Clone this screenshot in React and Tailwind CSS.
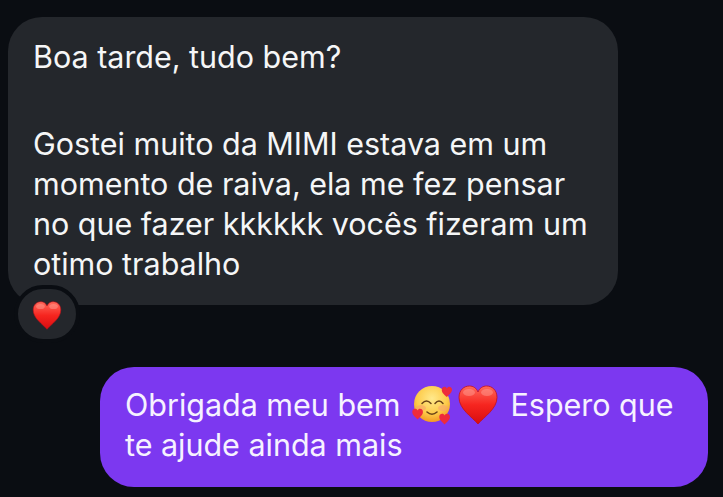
import React from "react";

const heartPath =
  "M20 39C14 32 1 24 1 12.500 1 5 6 1 11.500 1 15 1 18.500 3 20 7 21.500 3 25 1 28.500 1 34 1 39 5 39 12.500 39 24 26 32 20 39Z";

const Heart = ({ className, id }) => (
  <svg viewBox="0 0 40 40" className={className}>
    <defs>
      <linearGradient id={id} x1="0" y1="0" x2="0" y2="1">
        <stop offset="0" stopColor="#ff6a5c" />
        <stop offset="0.5" stopColor="#f6251f" />
        <stop offset="1" stopColor="#d80c10" />
      </linearGradient>
    </defs>
    <path d={heartPath} fill={`url(#${id})`} stroke="#c2101a" strokeWidth="0.800" />
    <ellipse cx="11" cy="7.500" rx="6" ry="3.500" fill="#ffb0a5" opacity="0.4" />
    <ellipse cx="29" cy="7.500" rx="6" ry="3.500" fill="#ffb0a5" opacity="0.4" />
  </svg>
);

const SmileHearts = () => (
  <svg viewBox="0 0 40 40" className="w-[40px] h-[40px]">
    <defs>
      <radialGradient id="face" cx="0.5" cy="0.35" r="0.65">
        <stop offset="0" stopColor="#ffe98c" />
        <stop offset="0.65" stopColor="#fdcb4a" />
        <stop offset="1" stopColor="#f39a22" />
      </radialGradient>
    </defs>
    <circle cx="20" cy="19" r="18" fill="url(#face)" />
    <ellipse cx="9" cy="23" rx="5" ry="3" fill="#f8a070" opacity="0.55" />
    <ellipse cx="31" cy="23" rx="5" ry="3" fill="#f8a070" opacity="0.55" />
    <path d="M10 18.500Q14.500 13.500 19 18.500M23 18.500Q27 13.500 31 18.500" fill="none" stroke="#6b4518" strokeWidth="1.500" strokeLinecap="round" />
    <path d="M15 27Q20 31.500 25 27" fill="none" stroke="#6b4518" strokeWidth="1.600" strokeLinecap="round" />
    <path d={heartPath} fill="#ee2b3b" transform="translate(29.500 1.500) scale(0.27)" />
    <path d={heartPath} fill="#ee2b3b" transform="translate(0 23.500) scale(0.28)" />
    <path d={heartPath} fill="#ee2b3b" transform="translate(27 28.500) scale(0.28)" />
  </svg>
);

const App = () => {
  return (
    <div className="w-[723px] h-[497px] overflow-hidden bg-[#0a0d12] font-['Inter','Noto_Sans',sans-serif] text-[30.5px] leading-[40px] tracking-[-0.02px] text-[#f5f6f7] pt-[17px]">
      <div className="relative ml-2 w-[610px] h-[288px] rounded-[34px] bg-[#24272c] pl-[25px] pr-4 pt-[20px]">
        <p>Boa tarde, tudo bem?</p>
        <p className="mt-[47px]">Gostei muito da MIMI estava em um</p>
        <p>momento de raiva, ela me fez pensar</p>
        <p>no que fazer kkkkkk vocês fizeram um</p>
        <p>otimo trabalho</p>
        <div className="absolute left-[6px] top-[268px] flex w-[66px] h-[58px] items-center justify-center rounded-full border-4 border-[#0a0d12] bg-[#24272c] pt-[3px]">
          <Heart id="h1" className="w-[30px] h-[29px]" />
        </div>
      </div>
      <div className="ml-[100px] mt-[62px] w-[608px] h-[120px] rounded-[34px] bg-[#7c38f0] pl-[25px] pt-[18px] text-[#f6f2ff]">
        <p className="flex items-center whitespace-nowrap">
          <span>Obrigada meu bem</span>
          <span className="ml-[11px] flex items-center">
            <SmileHearts />
            <Heart id="h2" className="ml-[6px] w-[40px] h-[40px]" />
          </span>
          <span className="ml-[13px]">Espero que</span>
        </p>
        <p>te ajude ainda mais</p>
      </div>
    </div>
  );
};

export default App;
